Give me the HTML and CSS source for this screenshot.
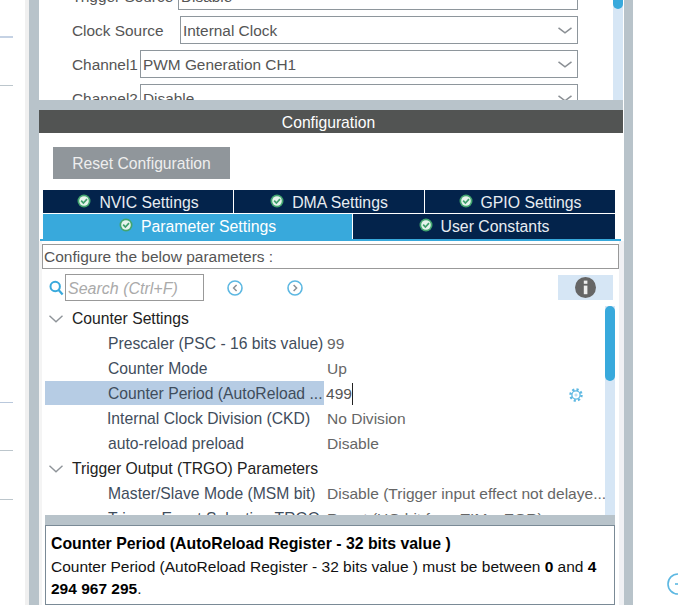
FILE: index.html
```html
<!DOCTYPE html>
<html lang="en">
<head>
  <meta charset="UTF-8" />
  <title>Configuration</title>
  <link rel="stylesheet" href="styles.css">
</head>
<body>

  <svg class="defs" width="0" height="0">
    <symbol id="ok" viewBox="0 0 14 14">
      <circle cx="7" cy="7" r="6.5" fill="#43a56f" />
      <circle cx="7" cy="7" r="4.8" fill="#e6f4ec" />
      <path d="M4.2 6.6 L6.4 9 L10 5.2" fill="none" stroke="#3f9f6c" stroke-width="1.7" />
    </symbol>
    <symbol id="drop" viewBox="0 0 14 7">
      <path d="M0.5 0.8 L7 5.8 L13.5 0.8" fill="none" stroke="#8a8f94" stroke-width="1.5" />
    </symbol>
    <symbol id="fold" viewBox="0 0 14 8">
      <path d="M0.5 0.8 L7 6.8 L13.5 0.8" fill="none" stroke="#8f9499" stroke-width="1.4" />
    </symbol>
  </svg>

  <div class="app">
    <div class="gutter">
      <div class="line line-a"></div>
      <div class="line line-b"></div>
      <div class="line line-c"></div>
      <div class="line line-d"></div>
      <div class="line line-e"></div>
    </div>
    <div class="edge"></div>
    <div class="rail"></div>

    <div class="main">
      <!-- Mode panel, cut off at the top and bottom -->
      <div class="mode">
        <div class="mode-form">
          <div class="mode-row">
            <span class="mode-label">Trigger Source</span>
            <div class="select select-trigger">Disable<svg class="drop"><use href="#drop" /></svg></div>
          </div>
          <div class="mode-row">
            <span class="mode-label">Clock Source</span>
            <div class="select select-clock">Internal Clock<svg class="drop"><use href="#drop" /></svg></div>
          </div>
          <div class="mode-row">
            <span class="mode-label">Channel1</span>
            <div class="select select-channel">PWM Generation CH1<svg class="drop"><use href="#drop" /></svg></div>
          </div>
          <div class="mode-row">
            <span class="mode-label">Channel2</span>
            <div class="select select-channel">Disable<svg class="drop"><use href="#drop" /></svg></div>
          </div>
        </div>
        <div class="mode-scroll"><div class="mode-thumb"></div></div>
      </div>

      <div class="splitter"></div>
      <div class="config-title">Configuration</div>

      <button class="reset-btn">Reset Configuration</button>

      <div class="tabs">
        <div class="tab-row">
          <div class="tab"><svg class="ok"><use href="#ok" /></svg>NVIC Settings</div>
          <div class="tab"><svg class="ok"><use href="#ok" /></svg>DMA Settings</div>
          <div class="tab"><svg class="ok"><use href="#ok" /></svg>GPIO Settings</div>
        </div>
        <div class="tab-row tab-row-low">
          <div class="tab tab-active"><svg class="ok"><use href="#ok" /></svg>Parameter Settings</div>
          <div class="tab"><svg class="ok"><use href="#ok" /></svg>User Constants</div>
        </div>
      </div>
      <div class="tab-line"></div>

      <div class="params">
        <div class="configure-box">Configure the below parameters :</div>

        <div class="toolbar">
          <svg class="search-icon" width="15" height="16" viewBox="0 0 15 16">
            <circle cx="6.2" cy="6.5" r="4.7" fill="none" stroke="#38a9dc" stroke-width="2" />
            <path d="M9.6 10 L13.6 14.4" stroke="#38a9dc" stroke-width="2.2" />
          </svg>
          <input class="search" type="text" placeholder="Search (Ctrl+F)">
          <svg class="nav nav-prev" width="16" height="16" viewBox="0 0 16 16">
            <circle cx="8" cy="8" r="7" fill="none" stroke="#5db8e2" stroke-width="1.6" />
            <path d="M9.6 5 L6.6 8 L9.6 11" fill="none" stroke="#8a8f94" stroke-width="1.5" />
          </svg>
          <svg class="nav nav-next" width="16" height="16" viewBox="0 0 16 16">
            <circle cx="8" cy="8" r="7" fill="none" stroke="#5db8e2" stroke-width="1.6" />
            <path d="M6.6 5 L9.6 8 L6.6 11" fill="none" stroke="#8a8f94" stroke-width="1.5" />
          </svg>
          <div class="info-box">
            <svg width="21" height="21" viewBox="0 0 21 21">
              <circle cx="10.5" cy="10.5" r="10.5" fill="#666" />
              <rect x="8.8" y="3.6" width="3.6" height="3.2" fill="#eee" />
              <rect x="8.8" y="8.6" width="3.6" height="8.6" fill="#eee" />
            </svg>
          </div>
        </div>

        <div class="tree-wrap">
          <div class="tree">
            <div class="group"><svg class="fold"><use href="#fold" /></svg>Counter Settings</div>
            <div class="param"><div class="param-name">Prescaler (PSC - 16 bits value)</div><div class="param-value">99</div></div>
            <div class="param"><div class="param-name">Counter Mode</div><div class="param-value">Up</div></div>
            <div class="param param-selected">
              <div class="param-name">Counter Period (AutoReload ...</div>
              <div class="param-value"><span class="editing">499</span></div>
              <svg class="gear" width="14" height="14" viewBox="0 0 15 15">
                <circle cx="7.5" cy="7.5" r="5.9" fill="none" stroke="#5db8e2" stroke-width="2.6" stroke-dasharray="2.3 2.3" />
                <circle cx="7.5" cy="7.5" r="4.4" fill="none" stroke="#5db8e2" stroke-width="1.4" />
                <path d="M7.5 5.8 V9.2 M5.8 7.5 H9.2" stroke="#9fd3ee" stroke-width="1" />
              </svg>
            </div>
            <div class="param"><div class="param-name param-name-ckd">Internal Clock Division (CKD)</div><div class="param-value">No Division</div></div>
            <div class="param"><div class="param-name">auto-reload preload</div><div class="param-value">Disable</div></div>
            <div class="group"><svg class="fold"><use href="#fold" /></svg>Trigger Output (TRGO) Parameters</div>
            <div class="param"><div class="param-name">Master/Slave Mode (MSM bit)</div><div class="param-value">Disable (Trigger input effect not delaye...</div></div>
            <div class="param"><div class="param-name">Trigger Event Selection TRGO</div><div class="param-value">Reset (UG bit from TIMx_EGR)</div></div>
          </div>
          <div class="tree-scroll"><div class="tree-thumb"></div></div>
        </div>

        <div class="desc-split"></div>
        <div class="desc">
          <b class="desc-title">Counter Period (AutoReload Register - 32 bits value )</b><br>
          Counter Period (AutoReload Register - 32 bits value ) must be between <b>0</b> and <b>4 294 967 295</b>.
        </div>
      </div>
    </div>

    <div class="rail rail-right"></div>
    <div class="side">
      <svg class="add" width="11" height="22" viewBox="0 0 11 22">
        <circle cx="11" cy="11" r="10" fill="none" stroke="#5db8e2" stroke-width="1.6" />
        <path d="M8 11 H11" stroke="#5db8e2" stroke-width="1.6" />
      </svg>
    </div>
  </div>

</body>
</html>
```

FILE: styles.css
```css
html, body {
  margin: 0;
  height: 100%;
  overflow: hidden;
  background-color: #fff;
}
body {
  font-family: "Liberation Sans", Arial, sans-serif;
  font-size: 15.7px;
  color: #555;
}
.defs {
  display: block;
  height: 0;
}
.app {
  display: flex;
  height: 605px;
  overflow: hidden;
}
.gutter {
  width: 25px;
  flex: none;
}
.line {
  width: 13px;
  height: 1px;
  background-color: #bcc6cc;
}
.line-a {
  margin-top: 36px;
  height: 2px;
  background-color: #c5d2e4;
}
.line-b {
  margin-top: 47px;
}
.line-c {
  margin-top: 316px;
  background-color: #b9c8dc;
}
.line-d {
  margin-top: 47px;
}
.line-e {
  margin-top: 48px;
}
.edge {
  width: 4px;
  flex: none;
  background-color: #f0f0f0;
}
.rail {
  width: 10px;
  flex: none;
  background-color: #b8c3ca;
}
.rail-right {
  width: 9px;
}
.main {
  width: 585px;
  flex: none;
  display: flex;
  flex-direction: column;
  overflow: hidden;
}

/* top panel */
.mode {
  display: flex;
  width: 584px;
  height: 100px;
  flex: none;
  overflow: hidden;
  font-size: 15.4px;
}
.mode-form {
  flex: 1;
  padding: 0 35px 0 33px;
  margin-top: -18px;
}
.mode-row {
  display: flex;
  align-items: center;
  justify-content: space-between;
  box-sizing: border-box;
  height: 28px;
  margin-bottom: 6px;
  color: #555;
}
.mode-label {
  padding-top: 2px;
}
.select {
  position: relative;
  box-sizing: border-box;
  height: 28px;
  line-height: 28px;
  padding-left: 2px;
  border: 1px solid #8e969c;
  color: #555;
}
.select-trigger {
  width: 400px;
}
.select-clock {
  width: 398px;
}
.select-channel {
  width: 438px;
}
.drop {
  position: absolute;
  right: 5px;
  top: 10px;
  width: 14px;
  height: 7px;
}
.mode-scroll {
  width: 10px;
  flex: none;
  background-color: #d6e6f5;
}
.mode-thumb {
  height: 9px;
  background-color: #38a9dc;
  border-radius: 0 0 5px 5px;
}
.splitter {
  width: 584px;
  height: 10px;
  flex: none;
  background-color: #b8c3ca;
}
.config-title {
  box-sizing: border-box;
  width: 584px;
  height: 23px;
  flex: none;
  padding-right: 5px;
  line-height: 25px;
  text-align: center;
  background-color: #525453;
  color: #fff;
}
.reset-btn {
  width: 177px;
  height: 32px;
  flex: none;
  margin: 14px 0 0 14px;
  padding: 2px 0 0;
  border: none;
  background-color: #90969b;
  color: #eee;
  font-family: inherit;
  font-size: 15.7px;
}

/* tabs */
.tabs {
  display: flex;
  flex-direction: column;
  gap: 1px;
  width: 572px;
  margin: 11px 0 0 4px;
  flex: none;
  font-size: 15.8px;
}
.tab-row {
  display: flex;
  gap: 1px;
  height: 23px;
}
.tab-row-low {
  height: 25px;
}
.tab {
  flex: 1;
  display: flex;
  align-items: center;
  justify-content: center;
  box-sizing: border-box;
  padding-top: 2px;
  background-color: #03234b;
  color: #e8edf2;
  white-space: nowrap;
}
.tab-row-low .tab {
  padding-top: 0;
}
.tab-active {
  flex: none;
  width: 309px;
  background-color: #38a9dc;
  color: #fff;
}
.ok {
  width: 14px;
  height: 14px;
  margin-right: 8px;
  margin-top: -3px;
}
.tab-line {
  width: 581px;
  height: 2px;
  flex: none;
  margin-left: 1px;
  background-color: #38a9dc;
}

/* parameters */
.params {
  flex: 1;
  display: flex;
  flex-direction: column;
  border-left: 3px solid #f4f4f4;
  border-right: 5px solid #f0f1f4;
  min-height: 0;
}
.configure-box {
  box-sizing: border-box;
  height: 25px;
  flex: none;
  margin-top: 3px;
  line-height: 23px;
  padding-left: 1px;
  border: 1px solid #999;
  font-size: 15.5px;
  white-space: nowrap;
}
.toolbar {
  display: flex;
  align-items: center;
  height: 27px;
  flex: none;
  margin-top: 5px;
  padding-left: 7px;
}
.search-icon {
  flex: none;
  margin-right: 1px;
}
.search {
  box-sizing: border-box;
  width: 139px;
  height: 27px;
  padding: 2px 2px 0;
  border: 1px solid #999;
  outline: none;
  font-family: inherit;
  font-size: 16px;
  font-style: italic;
}
.search::placeholder {
  color: #aaa;
  opacity: 1;
}
.nav-prev {
  margin-left: 23px;
}
.nav-next {
  margin-left: 44px;
}
.info-box {
  display: flex;
  align-items: center;
  justify-content: center;
  width: 55px;
  height: 25px;
  margin-left: auto;
  margin-right: 6px;
  background-color: #d6e6f5;
}
.tree-wrap {
  display: flex;
  height: 209px;
  flex: none;
  margin-top: 5px;
  padding-left: 3px;
  overflow: hidden;
}
.tree {
  width: 560px;
  flex: none;
}
.group {
  display: flex;
  align-items: center;
  height: 25px;
  padding-left: 4px;
  color: #222;
  white-space: nowrap;
}
.fold {
  width: 14px;
  height: 8px;
  margin-right: 9px;
}
.param {
  display: flex;
  align-items: center;
  height: 25px;
  white-space: nowrap;
}
.param-name {
  box-sizing: border-box;
  width: 279px;
  height: 25px;
  flex: none;
  line-height: 25px;
  padding-left: 63px;
  color: #3f4d5c;
}
.param-name-ckd {
  padding-left: 62px;
}
.param-value {
  flex: 1;
  margin-left: 3px;
  font-size: 15.55px;
  color: #666;
  overflow: hidden;
}
.param-selected .param-name {
  height: 24px;
  background-color: #b6cce4;
  margin-bottom: 1px;
}
.param-selected .param-value {
  margin-left: 2px;
  color: #555;
}
.editing {
  display: inline-block;
  line-height: 22px;
  border-right: 1px solid #222;
}
.gear {
  flex: none;
  margin: 3px 22px 0 0;
}
.tree-scroll {
  width: 10px;
  flex: none;
  background-color: #d6e6f5;
}
.tree-thumb {
  height: 75px;
  background-color: #38a9dc;
  border-radius: 5px;
}
.desc-split {
  width: 570px;
  height: 10px;
  flex: none;
  margin-left: 3px;
  background-color: #b8c3ca;
}
.desc {
  box-sizing: border-box;
  width: 570px;
  height: 80px;
  flex: none;
  margin-left: 3px;
  padding: 7px 5px 0;
  border: 1px solid #7a8a96;
  font-size: 15.5px;
  line-height: 22.5px;
  color: #111;
}
.desc b {
  color: #000;
}
.desc-title {
  font-size: 15.85px;
}
.side {
  flex: 1;
  display: flex;
  justify-content: flex-end;
  align-items: flex-end;
  padding-bottom: 10px;
}
.add {
  flex: none;
}
```
